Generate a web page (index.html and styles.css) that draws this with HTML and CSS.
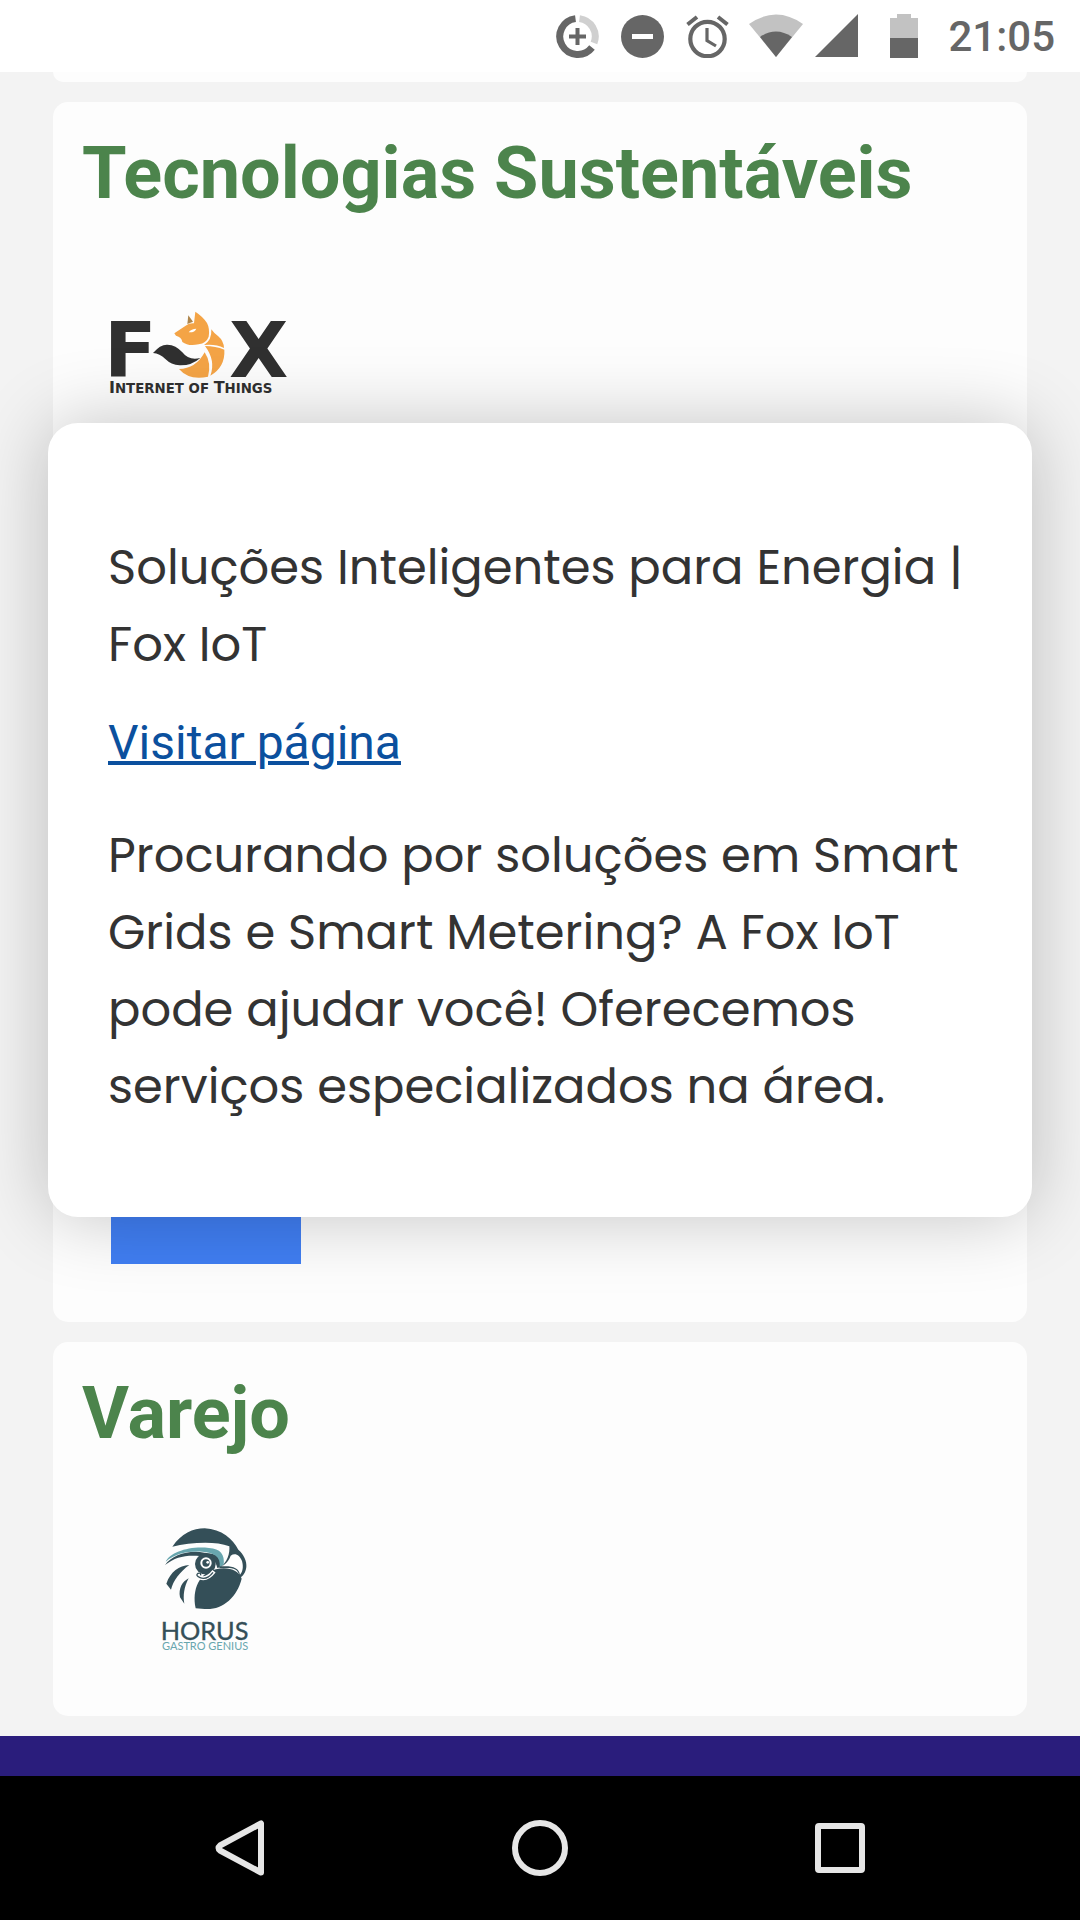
FILE: index.html
```html
<!DOCTYPE html>
<html lang="pt-BR">
<head>
<meta charset="utf-8">
<meta name="viewport" content="width=device-width, initial-scale=1">
<title>Tecnologias Sustentáveis</title>
<link rel="stylesheet" href="styles.css">
</head>
<body>
<header class="status-bar">
  <svg class="icon" width="43" height="43" viewBox="0 0 43 43" aria-hidden="true">
    <g fill="none" stroke-width="7">
      <path stroke="#666" d="M19.5 3.6A18 18 0 1 0 36 32.500"/>
      <path stroke="#d0d0d0" d="M23.500 3.600A18 18 0 0 1 38 28"/>
      <path stroke="#666" stroke-width="4" d="M21.500 13v17M13 21.500h17"/>
    </g>
  </svg>
  <svg class="icon" width="43" height="43" viewBox="0 0 43 43" aria-hidden="true">
    <circle cx="21.500" cy="21.500" r="21.500" fill="#666"/>
    <path fill="#fff" d="M11 19h21v5H11z"/>
  </svg>
  <svg class="icon" width="43" height="43" viewBox="0 0 43 43" aria-hidden="true">
    <g fill="none" stroke="#666">
      <circle cx="21.500" cy="24" r="17.200" stroke-width="4.200"/>
      <path stroke-width="4" d="M1.500 9.500L11 2M41.500 9.500L32 2"/>
      <path stroke-width="3.200" d="M21 13v12.500l9 5.500"/>
    </g>
  </svg>
  <span class="network">
    <svg class="icon" width="54" height="44" viewBox="0 0 54 44" aria-hidden="true">
      <path fill="#c2c2c2" d="M0 10Q27-9 54 10L27 43z"/>
      <path fill="#666" d="M11 23Q27 12 43 23L27 43z"/>
    </svg>
    <svg class="icon" width="43" height="43" viewBox="0 0 43 43" aria-hidden="true">
      <path fill="#666" d="M43 0v43H0z"/>
    </svg>
  </span>
  <svg class="icon battery" width="28" height="44" viewBox="0 0 28 44" aria-hidden="true">
    <path fill="#c2c2c2" d="M7 0h14v4h7v20H0V4h7z"/>
    <path fill="#666" d="M0 24h28v20H0z"/>
  </svg>
  <time class="clock">21:05</time>
</header>

<main class="content">
  <section class="card card-previous"></section>

  <section class="card">
    <h2 class="card-title">Tecnologias Sustentáveis</h2>
    <div class="logos">
      <a class="logo logo-fox" href="#fox" aria-label="Fox Internet of Things">
        <svg width="192" height="84" viewBox="33 34 576 252">
          <g fill="#303030" font-family="DejaVu Sans, sans-serif" font-weight="bold">
            <text x="15" y="232" font-size="231">F</text>
            <text x="390" y="232" font-size="231">X</text>
            <text x="30" y="280" font-size="48">I<tspan font-size="40">NTERNET OF </tspan>T<tspan font-size="40">HINGS</tspan></text>
          </g>
          <g fill="#f4a446">
            <path d="M226 101L260 78Q270 70 285 71L289 36Q312 51 324 70Q333 87 329 111Q322 130 299 134Q268 141 250 127Q248 112 231 108z"/>
            <path d="M337 89Q345 101 357 109Q374 123 375 145Q349 132 315 136Q339 122 337 89z"/>
            <path d="M318 139Q350 139 376 150Q379 202 334 228Q351 183 318 139z"/>
            <path d="M240 208Q290 208 317 158Q338 190 327 231Q270 243 240 208z"/>
          </g>
          <path fill="#ae854b" d="M268 47L282 66 265 73z"/>
          <path fill="#fff" d="M269 98Q277 87 292 87Q288 99 269 98z"/>
          <path fill="#303030" d="M162 160Q184 134 205 135Q231 136 250 158Q270 184 304 175Q278 198 242 197Q216 195 199 178Q182 161 162 160z"/>
        </svg>
      </a>
      <a class="logo logo-blue" href="#energia" aria-label="Energia"></a>
    </div>
  </section>

  <section class="card">
    <h2 class="card-title">Varejo</h2>
    <div class="logos">
      <a class="logo logo-horus" href="#horus" aria-label="Horus Gastro Genius">
        <svg width="90" height="122" viewBox="34 38 270 366">
          <g fill="#344f58">
            <path d="M68 94C95 55 130 39 165 39C216 41 250 72 266 103C282 116 292 138 290 155C288 172 280 182 270 188C269 167 257 157 236 158L207 158C234 145 241 112 239 93C195 76 120 82 68 94z"/>
            <path d="M46 149C67 119 117 103 164 112C205 114 219 128 216 154L203 158C198 132 179 120 150 122C105 119 78 125 46 149z"/>
            <circle cx="167" cy="146" r="31"/>
            <path d="M138 279C126 222 150 171 199 162C235 153 268 165 276 190C262 246 218 285 165 281z"/>
            <path d="M50 205C63 168 88 152 119 149C91 169 70 197 64 223z"/>
            <path d="M91 246C86 219 98 199 117 189C103 215 100 241 104 265z"/>
          </g>
          <path fill="#68a6ae" d="M48 139C62 111 119 91 178 98C212 99 226 119 222 148L210 154C214 124 192 111 158 109C111 107 78 115 48 139z"/>
          <g fill="#fff">
            <path d="M215 153C235 144 240 128 243 121C257 111 270 120 277 137C282 155 279 170 271 178C267 157 249 151 215 153z"/>
            <circle cx="169" cy="143" r="17"/>
          </g>
          <circle cx="169" cy="143" r="11" fill="#344f58"/>
          <circle cx="174" cy="141" r="4" fill="#fff"/>
          <path fill="none" stroke="#fdfdfd" stroke-width="12" d="M193 168Q172 195 151 187"/>
          <path fill="none" stroke="#344f58" stroke-width="4" d="M190 171Q172 195 151 187Q136 181 145 174Q154 171 153 180"/>
          <g font-family="Lato, sans-serif">
            <text x="33" y="373" font-size="76" fill="#344f58" stroke="#344f58" stroke-width="1">HORUS</text>
            <text x="37" y="403" font-size="33" fill="#68a6ae">GASTRO GENIUS</text>
          </g>
        </svg>
      </a>
    </div>
  </section>

  <article class="popup" role="dialog" aria-labelledby="popup-title">
    <h3 class="popup-text" id="popup-title">Soluções Inteligentes para Energia | Fox IoT</h3>
    <a class="popup-link" href="#visitar">Visitar página</a>
    <p class="popup-text">Procurando por soluções em Smart Grids e Smart Metering? A Fox IoT pode ajudar você! Oferecemos serviços especializados na área.</p>
  </article>
</main>

<footer class="page-footer"></footer>

<nav class="system-nav">
  <button class="nav-button" type="button" aria-label="Voltar">
    <svg width="56" height="56" viewBox="0 0 56 56"><path d="M49 3.500v49L8 30.500Q5 28 8 25.500z"/></svg>
  </button>
  <button class="nav-button" type="button" aria-label="Início">
    <svg width="56" height="56" viewBox="0 0 56 56"><circle cx="28" cy="28" r="25"/></svg>
  </button>
  <button class="nav-button" type="button" aria-label="Recentes">
    <svg width="56" height="56" viewBox="0 0 56 56"><rect x="6" y="6" width="44" height="44" rx="1"/></svg>
  </button>
</nav>
</body>
</html>
```

FILE: styles.css
```css
* {
  box-sizing: border-box;
}

body {
  display: flex;
  flex-direction: column;
  min-height: 100vh;
  margin: 0;
  background: #f3f3f3;
  color: #333;
  font-family: Roboto, sans-serif;
}

/* Status bar */
.status-bar {
  display: flex;
  align-items: center;
  justify-content: flex-end;
  gap: 20px;
  height: 72px;
  padding-right: 25px;
  background: #fff;
}

.icon {
  display: block;
}

.icon + .icon {
  margin-left: 2px;
}

.network {
  display: flex;
  gap: 10px;
}

.battery {
  margin-left: 12px;
}

.clock {
  margin-left: 10px;
  padding-top: 2px;
  color: #666;
  font-size: 42px;
  font-weight: 500;
  line-height: 72px;
}

/* Page */
.content {
  position: relative;
  display: flex;
  flex: 1;
  flex-direction: column;
  gap: 20px;
  padding: 0 53px 20px;
  overflow: hidden;
}

.card {
  padding: 30px 29px 58px;
  border-radius: 15px;
  background: #fdfdfd;
}

.card-previous {
  height: 10px;
  padding: 0;
  border-radius: 0 0 15px 15px;
}

.card-title {
  margin: 0 0 12px;
  color: #4c844c;
  font-size: 72px;
  font-weight: 700;
  line-height: 84px;
}

.logos {
  display: flex;
  flex-direction: column;
  align-items: flex-start;
  gap: 596px;
  padding-left: 29px;
}

.logo {
  display: flex;
  justify-content: center;
  width: 190px;
  height: 190px;
}

.logo svg {
  flex: none;
  overflow: visible;
}

.logo-fox {
  align-items: center;
  height: 250px;
}

.logo-blue {
  background: #407ef2;
}

.logo-horus {
  align-items: flex-end;
  padding-bottom: 8px;
}

/* Popup over the cards */
.popup {
  position: absolute;
  top: 351px;
  right: 48px;
  left: 48px;
  padding: 106px 60px 92px;
  border-radius: 30px;
  background: #fff;
  box-shadow: 0 0 76px rgba(0, 0, 0, 0.23);
}

.popup-text {
  margin: 0;
  font-family: Poppins, Inter, sans-serif;
  font-size: 48px;
  font-weight: 400;
  line-height: 77px;
}

.popup-link {
  display: block;
  width: fit-content;
  margin: 32px 0 46px;
  color: #0b509e;
  font-size: 48px;
  line-height: 56px;
  text-decoration-thickness: 4px;
}

/* Footer and system navigation */
.page-footer {
  height: 40px;
  background: #2a1d7c;
}

.system-nav {
  display: grid;
  grid-template-columns: repeat(3, 1fr);
  height: 144px;
  padding: 0 90px;
  background: #000;
}

.nav-button {
  display: flex;
  align-items: center;
  justify-content: center;
  padding: 0;
  border: 0;
  background: none;
}

.nav-button svg {
  fill: none;
  stroke: #e6e6e6;
  stroke-width: 6px;
  stroke-linejoin: round;
}
```
